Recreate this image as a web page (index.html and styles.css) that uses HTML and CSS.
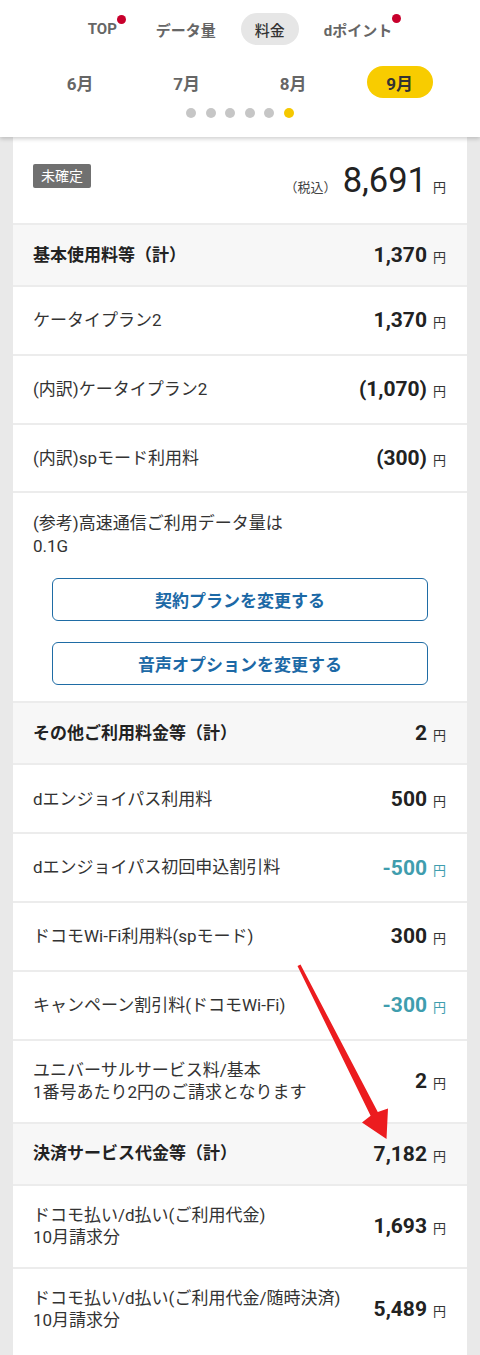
FILE: index.html
```html
<!DOCTYPE html>
<html lang="ja">
<head>
  <meta charset="UTF-8" />
  <meta name="viewport" content="width=device-width, initial-scale=1.0" />
  <title>ご利用料金</title>
  <link rel="stylesheet" href="styles.css">
</head>
<body>
  <div class="page">
    <header class="top">
      <nav class="tabs">
        <span class="tab"><span class="dot-wrap">TOP<i class="badge-dot"></i></span></span>
        <span class="tab">データ量</span>
        <span class="tab active">料金</span>
        <span class="tab"><span class="dot-wrap">dポイント<i class="badge-dot"></i></span></span>
      </nav>

      <div class="months">
        <span class="month">6月</span>
        <span class="month">7月</span>
        <span class="month">8月</span>
        <span class="month current">9月</span>
      </div>

      <div class="pager">
        <i></i><i></i><i></i><i></i><i></i><i class="on"></i>
      </div>
    </header>

    <main class="card">
      <div class="total">
        <span class="status">未確定</span>
        <div class="total-amount">
          <span class="tax">（税込）</span>
          <span class="big">8,691</span>
          <span class="yen">円</span>
        </div>
      </div>

      <div class="row sum">
        <span class="label">基本使用料等（計）</span>
        <span class="value">1,370<span class="yen">円</span></span>
      </div>
      <div class="row">
        <span class="label">ケータイプラン2</span>
        <span class="value">1,370<span class="yen">円</span></span>
      </div>
      <div class="row">
        <span class="label">(内訳)ケータイプラン2</span>
        <span class="value">(1,070)<span class="yen">円</span></span>
      </div>
      <div class="row">
        <span class="label">(内訳)spモード利用料</span>
        <span class="value">(300)<span class="yen">円</span></span>
      </div>

      <div class="note">
        <p class="label">(参考)高速通信ご利用データ量は<br>0.1G</p>
        <button class="link-btn">契約プランを変更する</button>
        <button class="link-btn">音声オプションを変更する</button>
      </div>

      <div class="row sum">
        <span class="label">その他ご利用料金等（計）</span>
        <span class="value">2<span class="yen">円</span></span>
      </div>
      <div class="row">
        <span class="label">dエンジョイパス利用料</span>
        <span class="value">500<span class="yen">円</span></span>
      </div>
      <div class="row">
        <span class="label">dエンジョイパス初回申込割引料</span>
        <span class="value minus">-500<span class="yen">円</span></span>
      </div>
      <div class="row">
        <span class="label">ドコモWi-Fi利用料(spモード)</span>
        <span class="value">300<span class="yen">円</span></span>
      </div>
      <div class="row">
        <span class="label">キャンペーン割引料(ドコモWi-Fi)</span>
        <span class="value minus">-300<span class="yen">円</span></span>
      </div>
      <div class="row tall">
        <span class="label">ユニバーサルサービス料/基本<br>1番号あたり2円のご請求となります</span>
        <span class="value">2<span class="yen">円</span></span>
      </div>

      <div class="row sum">
        <span class="label">決済サービス代金等（計）</span>
        <span class="value">7,182<span class="yen">円</span></span>
      </div>
      <div class="row tall">
        <span class="label">ドコモ払い/d払い(ご利用代金)<br>10月請求分</span>
        <span class="value">1,693<span class="yen">円</span></span>
      </div>
      <div class="row tall">
        <span class="label">ドコモ払い/d払い(ご利用代金/随時決済)<br>10月請求分</span>
        <span class="value">5,489<span class="yen">円</span></span>
      </div>
    </main>

    <!-- red annotation arrow drawn over the list -->
    <svg class="arrow" width="480" height="1355" viewBox="0 0 480 1355">
      <polygon fill="#ec1c1f" points="297.5,966 300.5,964.5 377.8,1112 388,1108.5 386.5,1139 362,1122.5 370.6,1115.8" />
    </svg>
  </div>
</body>
</html>
```

FILE: styles.css
```css
body {
  margin: 0;
  background: #e9e9e9;
  font-family: Roboto, "Noto Sans CJK JP", sans-serif;
  color: #333;
}

.page {
  position: relative;
  width: 480px;
  min-height: 1355px;
  overflow: hidden;
}

/* header */
.top {
  position: relative;
  z-index: 1;
  height: 137px;
  background: #fff;
  box-shadow: 0 2px 4px rgba(0, 0, 0, 0.18);
  box-sizing: border-box;
  padding-top: 13px;
}

.tabs {
  display: flex;
  justify-content: center;
  gap: 11px;
}

.tab {
  display: flex;
  align-items: center;
  height: 32px;
  padding: 0 14px;
  border-radius: 16px;
  font-size: 15px;
  font-weight: 700;
  color: #666;
}

.tab.active {
  background: #e6e6e6;
  color: #333;
  font-weight: 500;
}

.dot-wrap {
  position: relative;
}

.badge-dot {
  position: absolute;
  right: -9px;
  top: -5px;
  width: 9px;
  height: 9px;
  border-radius: 50%;
  background: #c8002c;
}

.months {
  display: grid;
  grid-template-columns: repeat(4, 1fr);
  width: 426px;
  margin: 21px auto 0;
}

.month {
  justify-self: center;
  display: flex;
  align-items: center;
  justify-content: center;
  width: 66px;
  height: 32px;
  border-radius: 16px;
  font-size: 17px;
  font-weight: 700;
  color: #666;
}

.month.current {
  background: #f8cc00;
  color: #333;
}

.pager {
  display: flex;
  justify-content: center;
  gap: 9.5px;
  margin-top: 10px;
}

.pager i {
  width: 10px;
  height: 10px;
  border-radius: 50%;
  background: #c6c6c6;
}

.pager i.on {
  background: #f5c800;
}

/* card */
.card {
  margin: 0 13px;
  padding-bottom: 40px;
  background: #fff;
}

.total {
  display: flex;
  align-items: center;
  justify-content: space-between;
  height: 86px;
  padding: 0 21px 0 20px;
}

.status {
  background: #707070;
  color: #fff;
  font-size: 14px;
  line-height: 24px;
  padding: 0 8px;
  border-radius: 2px;
  margin-bottom: 8px;
}

.total-amount {
  display: flex;
  align-items: baseline;
}

.tax {
  font-size: 13px;
  color: #444;
  margin-right: 6px;
}

.big {
  font-size: 34.5px;
  color: #222;
}

.yen {
  font-size: 13px;
  font-weight: 400;
  margin-left: 6px;
}

.row {
  display: flex;
  align-items: center;
  justify-content: space-between;
  min-height: 66.8px;
  padding: 0 21px 0 20px;
  border-top: 2px solid #ececec;
}

.row.sum {
  min-height: 60px;
  background: #f7f7f7;
}

.row.sum .label {
  font-weight: 700;
  color: #222;
}

.row.tall {
  min-height: 81px;
}

.label {
  font-size: 17px;
  line-height: 22.5px;
  color: #333;
}

.value {
  font-size: 21px;
  font-weight: 700;
  color: #222;
  white-space: nowrap;
}

.value .yen {
  color: #333;
}

.value.minus,
.value.minus .yen {
  color: #3f9dae;
}

.note {
  border-top: 2px solid #ececec;
  padding: 19px 20px 16px;
}

.note .label {
  margin: 0 0 21px;
}

.link-btn {
  display: block;
  width: 376px;
  height: 43px;
  margin: 0 auto 21px;
  background: #fff;
  border: 1px solid #1f6ca5;
  border-radius: 6px;
  font-family: inherit;
  font-size: 17px;
  font-weight: 700;
  color: #1c69a6;
}

.link-btn:last-child {
  margin-bottom: 0;
}

.arrow {
  position: absolute;
  left: 0;
  top: 0;
  pointer-events: none;
}
```
